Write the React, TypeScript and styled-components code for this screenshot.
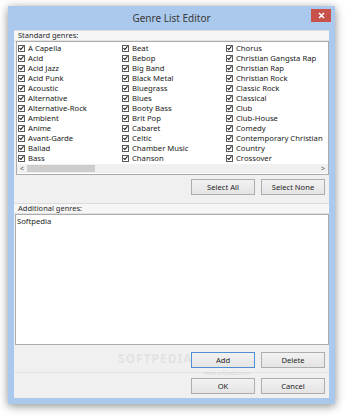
import styled, { createGlobalStyle } from "styled-components";

const GlobalStyle = createGlobalStyle`
  html, body {
    margin: 0;
    padding: 0;
    background: #ffffff;
  }
  body {
    font-family: "Noto Sans", "Open Sans", sans-serif;
    color: #1e1e1e;
  }
`;

const Page = styled.div`
  width: 350px;
  height: 418px;
  padding: 6px 0 0 8px;
  box-sizing: border-box;
`;

const Window = styled.div`
  width: 327px;
  height: 398px;
  background: #abc9ec;
  box-shadow: 0 2px 9px rgba(0, 0, 0, 0.45);
  padding: 0 6px 6px 6px;
  box-sizing: border-box;
  display: flex;
  flex-direction: column;
`;

const TitleBar = styled.div`
  position: relative;
  height: 24px;
  display: flex;
  align-items: center;
  justify-content: center;
  font-size: 10px;
  color: #3a3a3a;
`;

const CloseButton = styled.div`
  position: absolute;
  right: -2px;
  top: 3px;
  width: 20px;
  height: 13px;
  background: #c9514c;
  display: flex;
  align-items: center;
  justify-content: center;
`;

const Client = styled.div`
  flex: 1;
  background: #f0f0f0;
  display: flex;
  flex-direction: column;
  position: relative;
`;

const GroupHeader = styled.div<{ $top?: number }>`
  height: 9px;
  margin-top: ${(p) => p.$top ?? 0}px;
  padding-left: 4px;
  font-size: 7.5px;
  line-height: 9px;
  color: #2a2a2a;
  background: #f6f6f6;
  border-top: 1px solid #dcdcdc;
  border-bottom: 1px solid #e2e2e2;
`;

const ListBox = styled.div`
  margin: 0 0 0 2px;
  height: 134px;
  background: #ffffff;
  border: 1px solid #acacac;
  box-sizing: border-box;
  display: flex;
  flex-direction: column;
  overflow: hidden;
`;

const Columns = styled.div`
  flex: 1;
  display: grid;
  grid-template-columns: 104px 104px 104px;
  grid-template-rows: repeat(12, 10px);
  grid-auto-flow: column;
  padding: 1px 0 0 1px;
`;

const Item = styled.div`
  display: flex;
  align-items: center;
  gap: 3px;
  font-size: 7.7px;
  white-space: nowrap;
  color: #1a1a1a;
`;

const Check = styled.span`
  width: 7px;
  height: 7px;
  border: 1px solid #5a5a5a;
  background: #fff;
  box-sizing: border-box;
  display: flex;
  align-items: center;
  justify-content: center;
  flex-shrink: 0;
`;

const HScroll = styled.div`
  height: 9px;
  margin: 0 0 1px 0;
  display: flex;
  align-items: center;
  background: #f0f0f0;
  font-size: 7px;
  color: #606060;
`;

const Arrow = styled.span`
  width: 10px;
  text-align: center;
  line-height: 9px;
`;

const Track = styled.div`
  flex: 1;
  height: 7px;
  display: flex;
`;

const Thumb = styled.div`
  width: 68px;
  height: 7px;
  background: #cdcdcd;
`;

const ButtonRow = styled.div<{ $top: number }>`
  display: flex;
  justify-content: flex-end;
  gap: 6px;
  padding-right: 4px;
  margin-top: ${(p) => p.$top}px;
`;

const Button = styled.div<{ $focus?: boolean }>`
  width: 64px;
  height: 16px;
  box-sizing: border-box;
  border: 1px solid ${(p) => (p.$focus ? "#4d8fd0" : "#adadad")};
  background: linear-gradient(#f2f2f2, #e4e4e4);
  display: flex;
  align-items: center;
  justify-content: center;
  font-size: 7.6px;
  color: #1e1e1e;
`;

const TextArea = styled.div`
  margin: 0 0 0 1px;
  height: 131px;
  background: #ffffff;
  border: 1px solid #acacac;
  box-sizing: border-box;
  font-size: 7.7px;
  line-height: 12px;
  padding: 0 1px;
`;

const Separator = styled.div`
  height: 1px;
  background: #e3e3e3;
  margin-top: 4px;
`;

const Watermark = styled.div`
  position: absolute;
  left: 104px;
  top: 320px;
  font-size: 12px;
  font-weight: 700;
  letter-spacing: 1px;
  color: rgba(200, 200, 200, 0.35);
  pointer-events: none;
`;

const WatermarkUrl = styled.div`
  position: absolute;
  left: 190px;
  top: 340px;
  font-size: 5px;
  line-height: 6px;
  color: rgba(190, 190, 190, 0.5);
  pointer-events: none;
`;

const genres = [
  "A Capella", "Acid", "Acid Jazz", "Acid Punk", "Acoustic", "Alternative",
  "Alternative-Rock", "Ambient", "Anime", "Avant-Garde", "Ballad", "Bass",
  "Beat", "Bebop", "Big Band", "Black Metal", "Bluegrass", "Blues",
  "Booty Bass", "Brit Pop", "Cabaret", "Celtic", "Chamber Music", "Chanson",
  "Chorus", "Christian Gangsta Rap", "Christian Rap", "Christian Rock", "Classic Rock", "Classical",
  "Club", "Club-House", "Comedy", "Contemporary Christian", "Country", "Crossover",
];

function CheckMark() {
  return (
    <svg width="6" height="6" viewBox="0 0 6 6">
      <path d="M0.6 3.1 L2.3 4.8 L5.4 0.9" fill="none" stroke="#111" strokeWidth="1.3" />
    </svg>
  );
}

export default function App() {
  return (
    <Page>
      <GlobalStyle />
      <Window>
        <TitleBar>
          Genre List Editor
          <CloseButton>
            <svg width="7" height="7" viewBox="0 0 7 7">
              <path d="M1 1 L6 6 M6 1 L1 6" stroke="#fff" strokeWidth="1.5" />
            </svg>
          </CloseButton>
        </TitleBar>
        <Client>
          <GroupHeader>Standard genres:</GroupHeader>
          <ListBox>
            <Columns>
              {genres.map((g) => (
                <Item key={g}>
                  <Check>
                    <CheckMark />
                  </Check>
                  {g}
                </Item>
              ))}
            </Columns>
            <HScroll>
              <Arrow>&lt;</Arrow>
              <Track>
                <Thumb />
              </Track>
              <Arrow>&gt;</Arrow>
            </HScroll>
          </ListBox>
          <ButtonRow $top={4}>
            <Button>Select All</Button>
            <Button>Select None</Button>
          </ButtonRow>
          <GroupHeader $top={8}>Additional genres:</GroupHeader>
          <TextArea>Softpedia</TextArea>
          <ButtonRow $top={7}>
            <Button $focus>Add</Button>
            <Button>Delete</Button>
          </ButtonRow>
          <Separator />
          <ButtonRow $top={5}>
            <Button>OK</Button>
            <Button>Cancel</Button>
          </ButtonRow>
          <Watermark>SOFTPEDIA</Watermark>
          <WatermarkUrl>www.softpedia.com</WatermarkUrl>
        </Client>
      </Window>
    </Page>
  );
}
